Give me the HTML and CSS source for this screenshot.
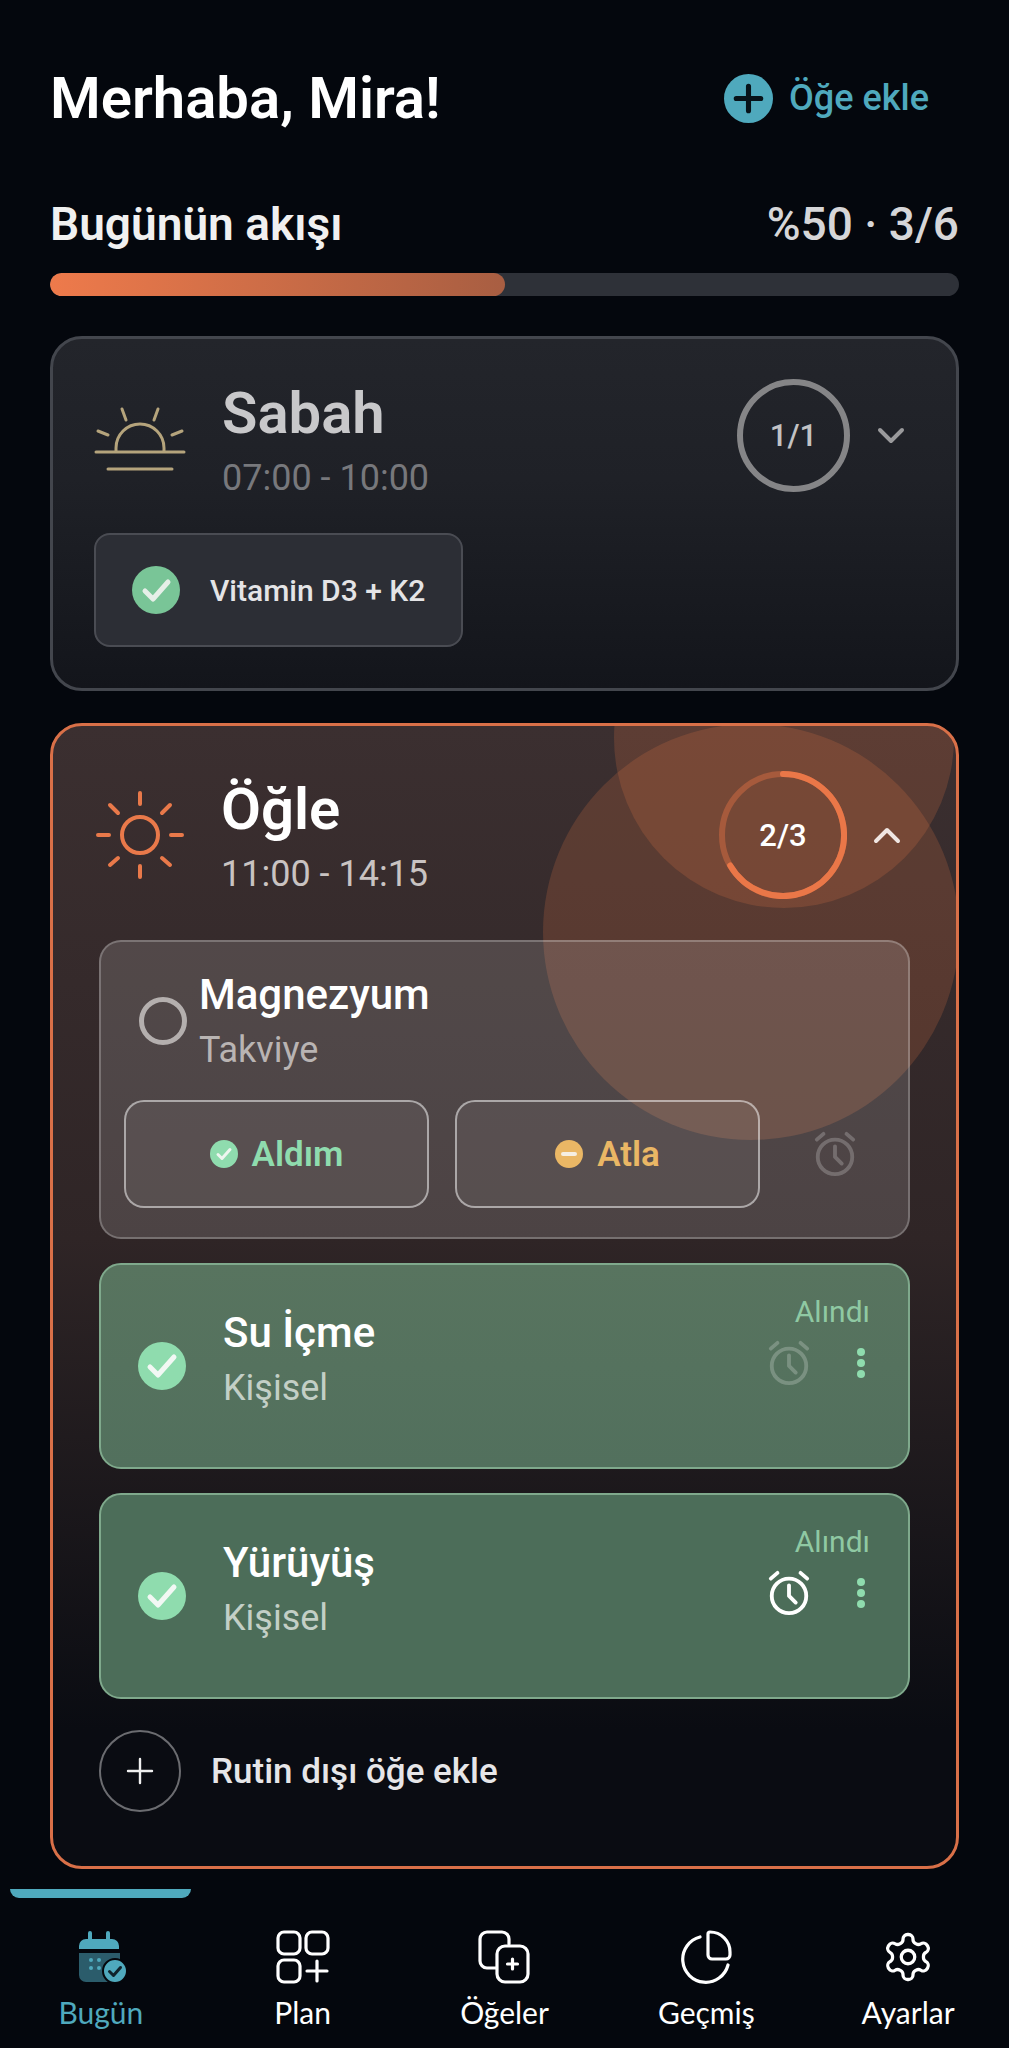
FILE: index.html
```html
<!DOCTYPE html>
<html lang="tr">
<head>
    <meta charset="UTF-8">
    <meta name="viewport" content="width=device-width, initial-scale=1.0">
    <title>Bugün</title>
    <link rel="stylesheet" href="styles.css">
</head>
<body>
    <main class="page">
        <header class="top-row">
            <h1>Merhaba, Mira!</h1>
            <div class="add-link">
                <svg class="add-icon" viewBox="0 0 48 48"><circle cx="24" cy="24" r="24" fill="#4fa9bd"/><path d="M24 12v24M12 24h24" stroke="#07131a" stroke-width="5" stroke-linecap="round"/></svg>
                <span>Öğe ekle</span>
            </div>
        </header>

        <section class="flow-row">
            <h2>Bugünün akışı</h2>
            <span class="flow-count">%50 · 3/6</span>
        </section>
        <div class="progress"><div class="progress-fill"></div></div>

        <!-- Sabah -->
        <section class="slot slot-done">
            <div class="slot-head">
                <svg class="slot-icon" viewBox="0 0 92 68" fill="none" stroke="#b5a47c" stroke-width="3" stroke-linecap="round">
                    <path d="M2 48h88M14 65h64M22 47v-3a24 24 0 0 1 48 0v3"/>
                    <path d="M28 5l4 11M64 5l-4 11M4 27l10 4M88 27l-10 4"/>
                </svg>
                <div class="slot-text">
                    <h3>Sabah</h3>
                    <p>07:00 - 10:00</p>
                </div>
                <div class="ring ring-grey">1/1</div>
                <svg class="chevron" viewBox="0 0 28 18" fill="none" stroke="#9a9a9c" stroke-width="4" stroke-linecap="round" stroke-linejoin="round"><path d="M3 3l11 11L25 3"/></svg>
            </div>
            <div class="done-pill">
                <svg class="check-icon" viewBox="0 0 48 48"><circle cx="24" cy="24" r="24" fill="#79c597"/><path d="M13 25l8 8 15-17" fill="none" stroke="#e6efe8" stroke-width="5" stroke-linecap="round" stroke-linejoin="round"/></svg>
                <span>Vitamin D3 + K2</span>
            </div>
        </section>

        <!-- Öğle -->
        <section class="slot slot-active">
            <div class="glow glow-big"></div>
            <div class="glow glow-small"></div>

            <div class="slot-head">
                <svg class="slot-icon sun" viewBox="0 0 90 90" fill="none" stroke="#e9794a" stroke-width="4" stroke-linecap="round">
                    <circle cx="45" cy="45" r="18"/>
                    <path d="M45 3v11M45 76v11M3 45h11M76 45h11M15 15l8 8M75 15l-8 8M15 75l8-7M75 75l-8-7"/>
                </svg>
                <div class="slot-text">
                    <h3>Öğle</h3>
                    <p>11:00 - 14:15</p>
                </div>
                <div class="ring-wrap">
                    <svg viewBox="0 0 128 128" fill="none" stroke-width="6">
                        <circle cx="64" cy="64" r="61" stroke="#a65a3c"/>
                        <path d="M64 3a61 61 0 1 1-52.8 91.5" stroke="#ea7748" stroke-linecap="round"/>
                    </svg>
                    <span>2/3</span>
                </div>
                <svg class="chevron" viewBox="0 0 28 18" fill="none" stroke="#f0e6e2" stroke-width="4" stroke-linecap="round" stroke-linejoin="round"><path d="M3 15L14 4l11 11"/></svg>
            </div>

            <div class="task-list">
                <article class="task task-open">
                    <div class="task-main">
                        <span class="radio"></span>
                        <div class="task-text">
                            <h4>Magnezyum</h4>
                            <p>Takviye</p>
                        </div>
                    </div>
                    <div class="task-actions">
                        <button class="action action-take">
                            <svg viewBox="0 0 28 28"><circle cx="14" cy="14" r="14" fill="#8fdcae"/><path d="M8 14.5l4 4 8-9" fill="none" stroke="#eef6f0" stroke-width="3" stroke-linecap="round" stroke-linejoin="round"/></svg>
                            Aldım
                        </button>
                        <button class="action action-skip">
                            <svg viewBox="0 0 28 28"><circle cx="14" cy="14" r="14" fill="#eab765"/><path d="M8 14h12" stroke="#f6efe2" stroke-width="4" stroke-linecap="round"/></svg>
                            Atla
                        </button>
                        <svg class="alarm alarm-dim" viewBox="0 0 48 48" fill="none" stroke-width="4" stroke-linecap="round" stroke-linejoin="round"><circle cx="24" cy="27" r="18"/><path d="M24 16v11l7 7M5 9l7-6M43 9l-7-6"/></svg>
                    </div>
                </article>

                <article class="task task-done">
                    <svg class="check-icon" viewBox="0 0 48 48"><circle cx="24" cy="24" r="24" fill="#8fdcae"/><path d="M12 25l8 8 16-18" fill="none" stroke="#f2f8f4" stroke-width="5" stroke-linecap="round" stroke-linejoin="round"/></svg>
                    <div class="task-text">
                        <h4>Su İçme</h4>
                        <p>Kişisel</p>
                    </div>
                    <div class="task-side">
                        <span class="taken">Alındı</span>
                        <div class="side-icons">
                            <svg class="alarm alarm-dim" viewBox="0 0 48 48" fill="none" stroke-width="4" stroke-linecap="round" stroke-linejoin="round"><circle cx="24" cy="27" r="18"/><path d="M24 16v11l7 7M5 9l7-6M43 9l-7-6"/></svg>
                            <svg class="dots" viewBox="0 0 10 32" fill="#8fdcae"><circle cx="5" cy="5" r="4"/><circle cx="5" cy="16" r="4"/><circle cx="5" cy="27" r="4"/></svg>
                        </div>
                    </div>
                </article>

                <article class="task task-done task-done-on">
                    <svg class="check-icon" viewBox="0 0 48 48"><circle cx="24" cy="24" r="24" fill="#8fdcae"/><path d="M12 25l8 8 16-18" fill="none" stroke="#f2f8f4" stroke-width="5" stroke-linecap="round" stroke-linejoin="round"/></svg>
                    <div class="task-text">
                        <h4>Yürüyüş</h4>
                        <p>Kişisel</p>
                    </div>
                    <div class="task-side">
                        <span class="taken">Alındı</span>
                        <div class="side-icons">
                            <svg class="alarm alarm-on" viewBox="0 0 48 48" fill="none" stroke-width="4" stroke-linecap="round" stroke-linejoin="round"><circle cx="24" cy="27" r="18"/><path d="M24 16v11l7 7M5 9l7-6M43 9l-7-6"/></svg>
                            <svg class="dots" viewBox="0 0 10 32" fill="#8fdcae"><circle cx="5" cy="5" r="4"/><circle cx="5" cy="16" r="4"/><circle cx="5" cy="27" r="4"/></svg>
                        </div>
                    </div>
                </article>
            </div>

            <div class="extra-row">
                <span class="extra-btn">
                    <svg viewBox="0 0 28 28" fill="none" stroke="#f0f0f0" stroke-width="2.4" stroke-linecap="round"><path d="M14 2v24M2 14h24"/></svg>
                </span>
                <span>Rutin dışı öğe ekle</span>
            </div>
        </section>
    </main>

    <nav class="tabbar">
        <div class="tab-mark"></div>
        <div class="tabs">
            <div class="tab tab-active">
                <svg viewBox="0 0 54 54">
                    <path d="M5 19v-3a7 7 0 0 1 7-7h2V3a2 2 0 0 1 4 0v6h14V3a2 2 0 0 1 4 0v6h2a7 7 0 0 1 7 7v3z" fill="#4fa9bd"/>
                    <path d="M5 23h41v22a7 7 0 0 1-7 7H12a7 7 0 0 1-7-7z" fill="#2b5c6b"/>
                    <circle cx="17" cy="30" r="2" fill="#4fa9bd"/><circle cx="25" cy="30" r="2" fill="#4fa9bd"/><circle cx="17" cy="38" r="2" fill="#4fa9bd"/><circle cx="25" cy="38" r="2" fill="#4fa9bd"/>
                    <circle cx="41" cy="41" r="12" fill="#4fa9bd" stroke="#05080d" stroke-width="2"/>
                    <path d="M35.500 41.500l4 4 7-8" fill="none" stroke="#10242c" stroke-width="3" stroke-linecap="round" stroke-linejoin="round"/>
                </svg>
                <span>Bugün</span>
            </div>
            <div class="tab">
                <svg viewBox="0 0 54 54" fill="none" stroke="#fff" stroke-width="3.200" stroke-linecap="round">
                    <rect x="2" y="2" width="22" height="22" rx="6"/><rect x="30" y="2" width="22" height="22" rx="6"/><rect x="2" y="30" width="22" height="22" rx="6"/>
                    <path d="M41 31v20M31 41h20"/>
                </svg>
                <span>Plan</span>
            </div>
            <div class="tab">
                <svg viewBox="0 0 54 54" fill="none" stroke="#fff" stroke-width="3.200" stroke-linecap="round">
                    <path d="M19 38h-9a7 7 0 0 1-7-7V9a7 7 0 0 1 7-7h15a7 7 0 0 1 7 7v5"/>
                    <rect x="20" y="16" width="31" height="36" rx="8"/>
                    <path d="M35.500 29v10M30.500 34h10"/>
                </svg>
                <span>Öğeler</span>
            </div>
            <div class="tab">
                <svg viewBox="0 0 54 54" fill="none" stroke="#fff" stroke-width="3.200" stroke-linecap="round" stroke-linejoin="round">
                    <path d="M21 7A23 23 0 1 0 49 35"/>
                    <path d="M29 4a2 2 0 0 1 2-2 20 20 0 0 1 20 20v3a4 4 0 0 1-4 4H33a4 4 0 0 1-4-4z"/>
                </svg>
                <span>Geçmiş</span>
            </div>
            <div class="tab">
                <svg viewBox="0 0 24 24" fill="none" stroke="#fff" stroke-width="1.450" stroke-linecap="round" stroke-linejoin="round">
                    <path d="M12.220 2h-.44a2 2 0 0 0-2 2v.18a2 2 0 0 1-1 1.730l-.43.25a2 2 0 0 1-2 0l-.15-.08a2 2 0 0 0-2.730.73l-.22.38a2 2 0 0 0 .73 2.730l.15.1a2 2 0 0 1 1 1.720v.51a2 2 0 0 1-1 1.740l-.15.09a2 2 0 0 0-.73 2.730l.22.38a2 2 0 0 0 2.730.73l.15-.08a2 2 0 0 1 2 0l.43.25a2 2 0 0 1 1 1.730V20a2 2 0 0 0 2 2h.44a2 2 0 0 0 2-2v-.18a2 2 0 0 1 1-1.730l.43-.25a2 2 0 0 1 2 0l.15.08a2 2 0 0 0 2.730-.73l.22-.39a2 2 0 0 0-.73-2.730l-.15-.08a2 2 0 0 1-1-1.740v-.5a2 2 0 0 1 1-1.740l.15-.09a2 2 0 0 0 .73-2.730l-.22-.38a2 2 0 0 0-2.730-.73l-.15.08a2 2 0 0 1-2 0l-.43-.25a2 2 0 0 1-1-1.730V4a2 2 0 0 0-2-2z"/>
                    <circle cx="12" cy="12" r="3"/>
                </svg>
                <span>Ayarlar</span>
            </div>
        </div>
    </nav>
</body>
</html>
```

FILE: styles.css
```css
* {
    margin: 0;
    padding: 0;
    box-sizing: border-box;
}

body {
    font-family: 'Roboto', 'Liberation Sans', sans-serif;
    background-color: #04070d;
    color: #fff;
    width: 1009px;
    height: 2048px;
    overflow: hidden;
}

.page {
    padding: 60px 50px 0;
}

.top-row,
.flow-row {
    display: flex;
    justify-content: space-between;
    align-items: center;
}

.top-row {
    height: 76px;
}

h1 {
    font-size: 58px;
    font-weight: 600;
    letter-spacing: 0;
}

.add-link {
    display: flex;
    align-items: center;
    gap: 16px;
    padding-right: 30px;
    color: #4fa9bd;
    font-size: 36px;
    font-weight: 500;
}

.add-icon {
    width: 49px;
    height: 49px;
}

.flow-row {
    height: 60px;
    margin-top: 58px;
}

h2 {
    font-size: 46px;
    font-weight: 600;
    color: #f0f0f0;
}

.flow-count {
    font-size: 46px;
    font-weight: 500;
    color: #d6d6d8;
}

.progress {
    height: 23px;
    margin-top: 19px;
    background: #2e3138;
    border-radius: 12px;
    overflow: hidden;
}

.progress-fill {
    width: 50%;
    height: 100%;
    border-radius: 12px;
    background: linear-gradient(90deg, #ee7a4b, #a85e42);
}

.slot {
    position: relative;
    border-radius: 32px;
    overflow: hidden;
}

.slot-done {
    margin-top: 40px;
    height: 355px;
    padding: 40px 44px 0 41px;
    border: 3px solid #43464d;
    background: linear-gradient(180deg, #23252b 0%, #1f2127 40%, #13151b 100%);
}

.slot-active {
    margin-top: 32px;
    height: 1146px;
    padding: 45px 46px 0;
    border: 3px solid #d97048;
    background: linear-gradient(180deg, #3b2f30 0%, #2f2526 45%, #0a0c12 88%);
}

.glow {
    position: absolute;
    border-radius: 50%;
    background: rgba(232, 118, 72, 0.2);
}

.glow-big {
    width: 416px;
    height: 416px;
    left: 490px;
    top: -2px;
}

.glow-small {
    width: 340px;
    height: 340px;
    left: 561px;
    top: -158px;
}

.slot-head {
    position: relative;
    display: flex;
    align-items: center;
}

.slot-done .slot-head {
    height: 113px;
}

.slot-active .slot-head {
    height: 128px;
}

.slot-icon {
    width: 92px;
    height: 68px;
    flex: none;
    margin-top: 4px;
}

.slot-icon.sun {
    width: 90px;
    height: 90px;
    margin: 0 0 0 -4px;
}

.slot-text {
    flex: 1;
    margin-left: 36px;
    margin-top: 8px;
}

.slot-active .slot-text {
    margin-left: 36px;
    margin-top: 2px;
}

h3 {
    font-size: 58px;
    font-weight: 600;
    line-height: 66px;
    color: #c8c8ca;
}

.slot-active h3 {
    color: #fff;
}

.slot-text p {
    margin-top: 10px;
    font-size: 36px;
    line-height: 44px;
    color: #77787c;
}

.slot-active .slot-text p {
    color: #c9c3c2;
}

.ring {
    width: 113px;
    height: 113px;
    flex: none;
    display: flex;
    align-items: center;
    justify-content: center;
    border: 6px solid #858587;
    border-radius: 50%;
    font-size: 31px;
    font-weight: 500;
    color: #c2c2c4;
}

.ring-wrap {
    position: relative;
    width: 128px;
    height: 128px;
    flex: none;
    display: flex;
    align-items: center;
    justify-content: center;
    font-size: 31px;
    font-weight: 500;
    color: #fff;
}

.ring-wrap svg {
    position: absolute;
    inset: 0;
}

.chevron {
    width: 28px;
    height: 18px;
    flex: none;
    margin-left: 27px;
    margin-right: 7px;
}

.slot-active .chevron {
    margin-left: 26px;
    margin-right: 9px;
}

.done-pill {
    display: inline-flex;
    align-items: center;
    gap: 30px;
    margin-top: 41px;
    width: 369px;
    height: 114px;
    padding-left: 36px;
    background: #2c2e35;
    border: 2px solid #4a4c53;
    border-radius: 16px;
    font-size: 30px;
    font-weight: 500;
    color: #e4e4e6;
}

.check-icon {
    width: 48px;
    height: 48px;
    flex: none;
}

.task-list {
    position: relative;
    margin-top: 41px;
    display: flex;
    flex-direction: column;
    gap: 24px;
}

.task {
    border-radius: 22px;
}

.task-open {
    height: 299px;
    padding: 0 23px;
    background: rgba(255, 255, 255, 0.14);
    border: 2px solid rgba(255, 255, 255, 0.24);
}

.task-main {
    display: flex;
    align-items: center;
    height: 158px;
}

.radio {
    width: 48px;
    height: 48px;
    flex: none;
    margin-left: 15px;
    border: 5px solid #b4afae;
    border-radius: 50%;
}

.task-main .task-text {
    margin-left: 12px;
    margin-top: 0;
}

h4 {
    font-size: 42px;
    font-weight: 500;
    line-height: 50px;
    color: #fff;
}

.task-text p {
    margin-top: 8px;
    font-size: 36px;
    line-height: 44px;
    color: #b9b4b3;
}

.task-actions {
    display: flex;
    align-items: center;
    gap: 26px;
}

.action {
    display: flex;
    align-items: center;
    justify-content: center;
    gap: 14px;
    width: 305px;
    height: 108px;
    background: rgba(255, 255, 255, 0.06);
    border: 2px solid rgba(255, 255, 255, 0.5);
    border-radius: 20px;
    font-family: inherit;
    font-size: 35px;
    font-weight: 600;
}

.action svg {
    width: 28px;
    height: 28px;
}

.action-take {
    color: #8fdcae;
}

.action-skip {
    color: #eab765;
}

.task-actions .alarm {
    margin-left: 26px;
}

.alarm {
    width: 46px;
    height: 46px;
    flex: none;
}

.alarm-dim {
    stroke: rgba(255, 255, 255, 0.22);
}

.alarm-on {
    stroke: #fff;
}

.task-done {
    display: flex;
    align-items: center;
    height: 206px;
    padding: 0 38px 0 37px;
    background: linear-gradient(180deg, #58745f, #52705d);
    border: 2px solid #7fa98c;
}

.task-done-on {
    background: #4c6d59;
}

.task-done .task-text {
    flex: 1;
    margin-left: 37px;
    margin-top: -14px;
}

.task-done .task-text p {
    color: #c3cfc6;
}

.task-side {
    display: flex;
    flex-direction: column;
    align-items: flex-end;
    align-self: flex-start;
    margin-top: 27px;
}

.taken {
    font-size: 30px;
    line-height: 40px;
    color: #8fc9a3;
}

.side-icons {
    display: flex;
    align-items: center;
    gap: 44px;
    margin-top: 8px;
    margin-right: 4px;
}

.dots {
    width: 10px;
    height: 32px;
}

.extra-row {
    position: relative;
    display: flex;
    align-items: center;
    gap: 30px;
    margin-top: 31px;
    font-size: 35px;
    font-weight: 500;
    color: #e6e6e8;
}

.extra-btn {
    width: 82px;
    height: 82px;
    display: flex;
    align-items: center;
    justify-content: center;
    border: 2px solid #6b6c70;
    border-radius: 50%;
}

.extra-btn svg {
    width: 28px;
    height: 28px;
}

.tabbar {
    margin-top: 20px;
}

.tab-mark {
    width: 181px;
    height: 9px;
    margin-left: 10px;
    background: #4fa9bd;
    border-radius: 0 0 10px 10px;
}

.tabs {
    display: grid;
    grid-template-columns: repeat(5, 1fr);
    margin-top: 32px;
}

.tab {
    display: flex;
    flex-direction: column;
    align-items: center;
    font-family: 'Lato', sans-serif;
    font-size: 30px;
    line-height: 38px;
    color: #fff;
}

.tab svg {
    width: 54px;
    height: 54px;
    margin-bottom: 9px;
}

.tab-active {
    color: #4fa9bd;
}
```
